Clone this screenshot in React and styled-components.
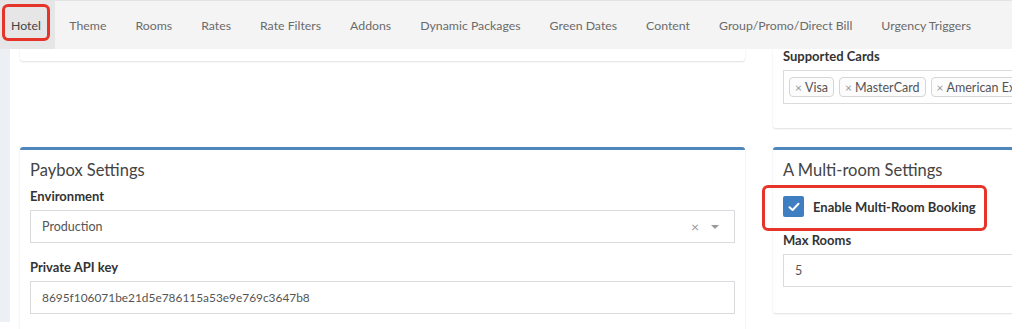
import React from 'react';
import styled, { createGlobalStyle } from 'styled-components';

const tabs = ["Hotel","Theme","Rooms","Rates","Rate Filters","Addons","Dynamic Packages","Green Dates","Content","Group/Promo/Direct Bill","Urgency Triggers"]
const cards = ["Visa","MasterCard","American Express"]

export default function App(){

    return(
        <>
        <GlobalStyle/>
        <Page>
            <TabBar>
                {tabs.map((t, index) => <Tab key={t} $active={index === 0}>{t}{index === 0 ? <Mark $tab/> : null}</Tab>)}
            </TabBar>

            <Body>
                <Strip/>
                <Content>
                    <Box $cut $short/>

                    <Box $cut>
                        <Label>Supported Cards</Label>
                        <MultiSelect>
                            {cards.map(c => <Tag key={c}><TagX>×</TagX>{c}</Tag>)}
                        </MultiSelect>
                    </Box>

                    <Box $accent>
                        <BoxTitle>Paybox Settings</BoxTitle>
                        <Group>
                            <Label>Environment</Label>
                            <Field>
                                Production
                                <FieldIcons>
                                    <Clear>×</Clear>
                                    <Caret/>
                                </FieldIcons>
                            </Field>
                        </Group>
                        <Group>
                            <Label>Private API key</Label>
                            <Field $small>8695f106071be21d5e786115a53e9e769c3647b8</Field>
                        </Group>
                    </Box>

                    <Box $accent $bottom>
                        <BoxTitle>A Multi-room Settings</BoxTitle>
                        <CheckRow>
                            <CheckBox>
                                <svg width="12" height="10" viewBox="0 0 12 10">
                                    <path d="M1.5 5.2 L4.6 8 L10.5 1.8" fill="none" stroke="#fff" strokeWidth="2" strokeLinecap="round" strokeLinejoin="round"/>
                                </svg>
                            </CheckBox>
                            <CheckLabel>Enable Multi-Room Booking</CheckLabel>
                            <Mark/>
                        </CheckRow>
                        <Group $tight>
                            <Label>Max Rooms</Label>
                            <Field>5</Field>
                        </Group>
                    </Box>
                </Content>
            </Body>
        </Page>
        </>
    )
}

const GlobalStyle = createGlobalStyle`
    body {
        margin: 0;
        background: #FFFFFF;
        font-family: 'Lato', 'Liberation Sans', sans-serif;
    }
`

const Page = styled.div`
    width: 1012px;
    height: 329px;
    overflow: hidden;
    display: flex;
    flex-direction: column;
    background: #FFFFFF;
`

const TabBar = styled.nav`
    height: 48px;
    flex-shrink: 0;
    display: flex;
    background: #F4F4F4;
    border-top: 1px solid #E4E4E4;
    position: relative;
    z-index: 1;
`

const Tab = styled.div`
    position: relative;
    display: flex;
    align-items: center;
    padding: 0 14.5px;
    font-size: 12.3px;
    color: ${props => props.$active ? "#444444" : "#6B6B6B"};
    background: ${props => props.$active ? "#E6E6E6" : "transparent"};
    white-space: nowrap;
    &:first-child{
        padding: 0 14px 0 11px;
    }
`

const Mark = styled.span`
    position: absolute;
    border: 3px solid #E5352B;
    border-radius: 6px;
    pointer-events: none;
    ${props => props.$tab ? `
        left: 2px;
        top: 3px;
        width: 42px;
        height: 31px;
    ` : `
        left: -21px;
        top: -11px;
        right: -11px;
        bottom: -14px;
    `}
`

const Body = styled.div`
    flex: 1;
    display: flex;
`

const Strip = styled.div`
    width: 10px;
    flex-shrink: 0;
    height: 273px;
    background: #ECF0F5;
`

const Content = styled.div`
    flex: 1;
    min-width: 0;
    padding-left: 10px;
    display: grid;
    grid-template-columns: 725px 347px;
    column-gap: 28px;
    row-gap: 19px;
    align-items: start;
    align-content: start;
`

const Box = styled.div`
    background: #FFFFFF;
    border-radius: ${props => props.$cut ? "0 0 3px 3px" : "3px"};
    border-top: 3px solid ${props => props.$accent ? "#4F87BC" : "transparent"};
    border-top-width: ${props => props.$cut ? "0" : "3px"};
    box-shadow: 0 1px 2px rgba(0, 0, 0, 0.13);
    padding: 10px 10px 0;
    padding-top: ${props => props.$cut ? "0" : "10px"};
    padding-bottom: ${props => props.$short ? "0" : props.$bottom ? "26px" : props.$cut ? "24px" : "0"};
    height: ${props => props.$short ? "12px" : "auto"};
    box-sizing: border-box;
`

const BoxTitle = styled.h3`
    margin: 0 0 9px;
    font-size: 16.5px;
    line-height: 20px;
    font-weight: 400;
    color: #444444;
`

const Group = styled.div`
    margin-bottom: ${props => props.$tight ? "0" : "17px"};
`

const Label = styled.div`
    font-size: 13px;
    line-height: 15px;
    font-weight: 700;
    color: #333333;
    margin-bottom: 6px;
`

const Field = styled.div`
    height: 33px;
    box-sizing: border-box;
    border: 1px solid #D9DBDE;
    display: flex;
    align-items: center;
    padding: 0 11px;
    font-size: ${props => props.$small ? "11.9px" : "12.5px"};
    color: #555555;
`

const FieldIcons = styled.div`
    margin-left: auto;
    display: flex;
    align-items: center;
    gap: 12px;
    padding-right: 4px;
`

const Clear = styled.span`
    font-size: 14px;
    color: #999999;
    line-height: 1;
`

const Caret = styled.span`
    width: 0;
    height: 0;
    border-left: 4px solid transparent;
    border-right: 4px solid transparent;
    border-top: 4px solid #999999;
`

const MultiSelect = styled.div`
    margin-top: 4px;
    height: 34px;
    box-sizing: border-box;
    border: 1px solid #D9DBDE;
    display: flex;
    align-items: center;
    gap: 5px;
    padding: 0 5px;
    overflow: hidden;
`

const Tag = styled.span`
    flex-shrink: 0;
    height: 18px;
    display: flex;
    align-items: center;
    gap: 3px;
    padding: 0 5px;
    border: 1px solid #D6D6D6;
    border-radius: 4px;
    background: #FCFCFC;
    font-size: 12.5px;
    color: #555555;
`

const TagX = styled.span`
    color: #999999;
    font-size: 12px;
`

const CheckRow = styled.div`
    position: relative;
    display: inline-flex;
    align-items: center;
    gap: 9px;
    margin: 7px 0 16px;
`

const CheckBox = styled.span`
    width: 21px;
    height: 21px;
    border-radius: 2px;
    background: #3F7EC0;
    display: flex;
    align-items: center;
    justify-content: center;
`

const CheckLabel = styled.span`
    font-size: 13px;
    font-weight: 700;
    color: #333333;
`
